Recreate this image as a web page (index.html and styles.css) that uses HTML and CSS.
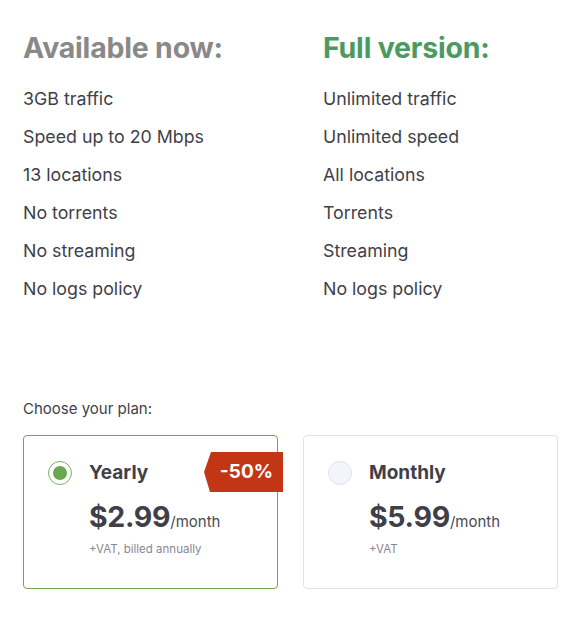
FILE: index.html
```html
<!DOCTYPE html>
<html>
<head>
<meta charset="utf-8">
<link rel="stylesheet" href="styles.css">
</head>
<body>
<div class="page">
  <div class="compare">
    <div class="col">
      <h2 class="title title-free">Available now:</h2>
      <ul class="list">
        <li>3GB traffic</li>
        <li>Speed up to 20 Mbps</li>
        <li>13 locations</li>
        <li>No torrents</li>
        <li>No streaming</li>
        <li>No logs policy</li>
      </ul>
    </div>
    <div class="col">
      <h2 class="title title-full">Full version:</h2>
      <ul class="list">
        <li>Unlimited traffic</li>
        <li>Unlimited speed</li>
        <li>All locations</li>
        <li>Torrents</li>
        <li>Streaming</li>
        <li>No logs policy</li>
      </ul>
    </div>
  </div>
  <div class="choose">Choose your plan:</div>
  <div class="plans">
    <div class="plan plan-active">
      <div class="badge">-50%</div>
      <div class="radio radio-on"><span class="dot"></span></div>
      <div class="info">
        <div class="name">Yearly</div>
        <div class="price"><span class="amount">$2.99</span><span class="per">/month</span></div>
        <div class="note">+VAT, billed annually</div>
      </div>
    </div>
    <div class="plan">
      <div class="radio"></div>
      <div class="info">
        <div class="name">Monthly</div>
        <div class="price"><span class="amount">$5.99</span><span class="per">/month</span></div>
        <div class="note">+VAT</div>
      </div>
    </div>
  </div>
</div>
</body>
</html>
```
FILE: styles.css
```css
* { box-sizing: border-box; }
html, body { margin: 0; padding: 0; background: #fff; }
body { font-family: "Inter", "Liberation Sans", sans-serif; color: #3f3f4a; }
.page { padding: 30px 23px 0 23px; }
.compare { display: grid; grid-template-columns: 300px 1fr; }
.title { margin: 0; font-size: 28.5px; font-weight: 700; line-height: 36px; letter-spacing: -0.2px; }
.title-free { color: #898989; }
.title-full { color: #4b9a62; }
.list { list-style: none; margin: 14px 0 0 0; padding: 0; }
.list li { font-size: 17.8px; line-height: 38px; height: 38px; }
.choose { margin-top: 91px; font-size: 15px; line-height: 20px; }
.plans { display: grid; grid-template-columns: 1fr 1fr; gap: 25px; margin-top: 16px; }
.plan { position: relative; height: 154px; border: 1px solid #e3e3ee; border-radius: 4px; display: flex; padding: 24px 0 0 24px; gap: 17px; }
.plan-active { border-color: #6aa84f; }
.radio { width: 24px; height: 24px; border-radius: 50%; border: 1px solid #e0e2ee; background: #f4f5fa; display: flex; align-items: center; justify-content: center; margin-top: 1px; flex: none; }
.radio-on { border: 1.5px solid #79b063; background: #fff; }
.dot { width: 14px; height: 14px; border-radius: 50%; background: #6aa84f; }
.name { font-size: 19px; font-weight: 700; line-height: 26px; }
.price { margin-top: 14px; line-height: 34px; }
.amount { font-size: 28.5px; font-weight: 700; letter-spacing: -0.3px; }
.per { font-size: 15px; color: #4a4a55; }
.note { margin-top: 3px; font-size: 11.5px; color: #888890; line-height: 14px; }
.badge { position: absolute; top: 16px; right: -6px; width: 79px; height: 40px; background: #c23616; color: #fff; font-size: 19px; font-weight: 700; line-height: 40px; text-align: right; padding-right: 10px; clip-path: polygon(7px 0, 100% 0, 100% 100%, 6px 100%, 0 50%); }
```
